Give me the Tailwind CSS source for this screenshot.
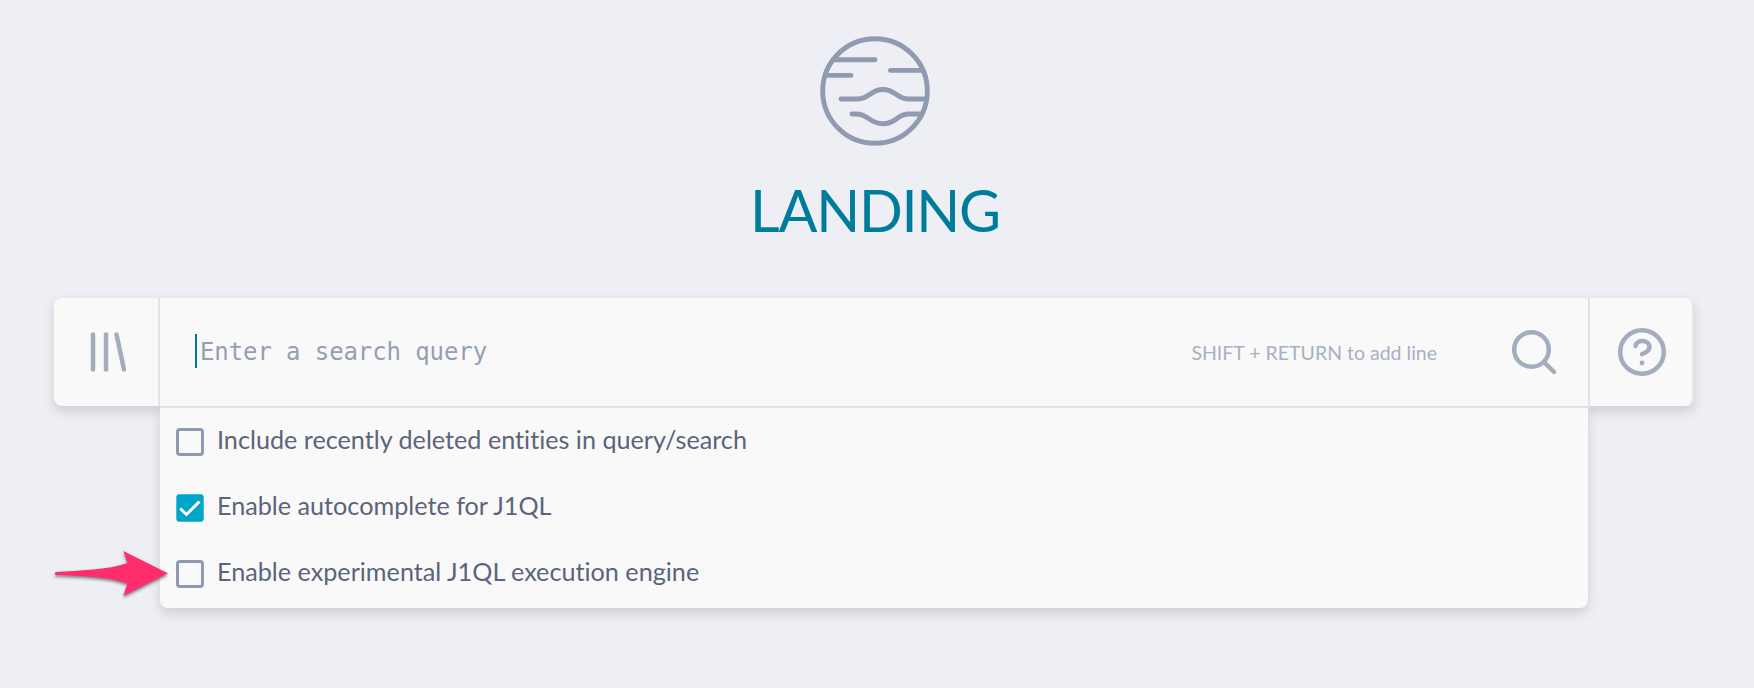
<!DOCTYPE html>
<html lang="en">
<head>
<meta charset="utf-8">
<title>Landing</title>
<script src="https://cdn.jsdelivr.net/npm/@tailwindcss/browser@4"></script>
</head>
<body class="relative h-[688px] overflow-hidden bg-[#eeeff4] font-['Lato',sans-serif] text-[#5b647b] [font-variant-ligatures:none]">
<main class="flex flex-col">
  <header class="flex h-[298px] flex-col items-center pt-[35px] pr-1">
    <svg class="size-28 shrink-0" viewBox="0 0 112 112" fill="none" stroke="#909ab0" stroke-width="4.9" stroke-linecap="round">
      <circle cx="56" cy="56" r="52.3"/>
      <path d="M14 24.7H56M7 40.4H32M71.500 35.4H103M22 64H38C51 64 51 54.500 64 54.500S77 64 90 64H107M33 79H37C50 79 50 88.700 64 88.700S77 79 90 79H102"/>
    </svg>
    <h1 class="mt-7 text-[57.600px] leading-[70px] tracking-[-1.250px] text-[#007c9b]">LANDING</h1>
  </header>
  <section class="ml-[54px] flex w-[1640px] flex-col">
    <div class="flex h-[108px] rounded-lg bg-[#f9f9f9] shadow-[0_5px_12px_rgba(0,0,0,0.15)]">
      <button class="flex w-[106px] items-center justify-center border-r-2 border-[#e4e4e4] pr-2">
        <svg class="size-12" viewBox="0 0 48 48" fill="none" stroke="#a4acbf" stroke-width="4.5" stroke-linecap="round"><path d="M15 6.500V41.500M28 6.500V41.500M38.500 6.500L46 41.500" /></svg>
      </button>
      <div class="flex w-[1430px] items-center border-r-2 border-[#e4e4e4] pl-[35px]">
        <span class="mb-0.5 h-[34px] w-0.5 bg-[#007c9b]"></span>
        <span class="ml-[3px] font-['DejaVu_Sans_Mono',monospace] text-2xl tracking-[-0.100px] text-[#959eb3]">Enter a search query</span>
        <span class="ml-auto pt-0.5 text-[19.500px] text-[#a8b0c3]">SHIFT + RETURN to add line</span>
        <svg class="mr-[30px] ml-[73px] size-12" viewBox="0 0 48 48" fill="none" stroke="#a4acbf" stroke-width="4.5" stroke-linecap="round"><circle cx="21.500" cy="21.500" r="17.300"/><path d="M34.500 34.500L44 44"/></svg>
      </div>
      <button class="flex w-[104px] items-center justify-center rounded-r-lg border-r-2 border-[#e4e4e4] pl-0.5">
        <svg class="size-[50px]" viewBox="0 0 50 50" fill="none" stroke="#a4acbf" stroke-width="4.500" stroke-linecap="round" stroke-linejoin="round"><circle cx="25" cy="25" r="21.800"/><path d="M18.500 19C19.500 12 32.500 12.500 32.500 20C32.500 24 28 26 25 27.200"/><circle cx="25" cy="36" r="2.400" fill="#a4acbf" stroke="none"/></svg>
      </button>
    </div>
    <div class="ml-[106px] w-[1430px]">
      <div class="h-0.5 bg-[#e3e3e3]"></div>
      <div class="flex h-[200px] w-[1428px] flex-col rounded-b-lg bg-[#f9f9f9] pl-4 text-[25.200px] shadow-[0_5px_12px_rgba(0,0,0,0.14)] [clip-path:inset(0_-30px_-30px_-30px)]">
        <label class="flex h-[66px] items-center gap-[13px]"><span class="mt-0.5 size-7 rounded-[4px] border-3 border-[#8f99b1]"></span><span class="pb-0.5">Include recently deleted entities in query/search</span></label>
        <label class="flex h-[66px] items-center gap-[13px]"><svg class="mt-0.5 size-7" viewBox="0 0 28 28"><rect x=".3" y=".3" width="27.400" height="27.400" rx="3" fill="#00a5c8"/><path d="M4.200 14.500L10.500 20.500L23.500 7.500" fill="none" stroke="#fff" stroke-width="3"/></svg><span class="pb-0.5">Enable autocomplete for J1QL</span></label>
        <label class="flex h-[66px] items-center gap-[13px]"><span class="mt-0.5 size-7 rounded-[4px] border-3 border-[#8f99b1]"></span><span class="pb-0.5">Enable experimental J1QL execution engine</span></label>
      </div>
    </div>
  </section>
</main>
<svg class="absolute top-[545px] left-[50px] h-[60px] w-[125px] drop-shadow-[0_2px_1.500px_rgba(0,0,0,0.45)]" viewBox="0 0 125 60" fill="#ff2d6b"><path d="M6 27C28 25.500 58 25 77.500 18L73.300 6L118 28.300L73.300 51L77.500 38.500C58 31.500 28 31 6 30C4.500 29.500 4.500 27.500 6 27Z"/></svg>
</body>
</html>
